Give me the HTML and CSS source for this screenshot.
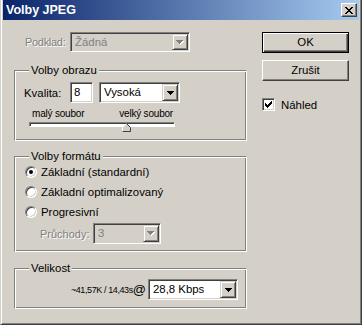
FILE: index.html
```html
<!DOCTYPE html>
<html lang="cs">

<head>
    <meta charset="UTF-8">
    <title>Volby JPEG</title>
    <link rel="stylesheet" href="styles.css">
</head>

<body>
    <div class="window">
        <div class="titlebar">
            <span class="title">Volby JPEG</span>
            <span class="close-btn">
                <svg width="8" height="7" viewBox="0 0 8 7" shape-rendering="crispEdges">
                    <path d="M0 0h2v1h-2zM6 0h2v1h-2zM1 1h2v1h-2zM5 1h2v1h-2zM2 2h4v1h-4zM3 3h2v1h-2zM2 4h4v1h-4zM1 5h2v1h-2zM5 5h2v1h-2zM0 6h2v1h-2zM6 6h2v1h-2z" fill="#000"/>
                </svg>
            </span>
        </div>

        <div class="main">
            <div class="left">
                <div class="podklad-row">
                    <span class="label disabled podklad-label">Podklad:</span>
                    <div class="combo combo-disabled podklad-combo">
                        <span class="combo-text">Žádná</span>
                        <span class="combo-btn">
                            <svg width="8" height="5" viewBox="0 0 8 5" shape-rendering="crispEdges">
                                <path d="M1 1h7v1h-1v1h-1v1h-1v1h-1v-1h-1v-1h-1v-1h-1z" fill="#fff"/>
                                <path d="M0 0h7v1h-1v1h-1v1h-1v1h-1v-1h-1v-1h-1v-1h-1z" fill="#808080"/>
                            </svg>
                        </span>
                    </div>
                </div>

                <!-- Volby obrazu -->
                <div class="group group-obraz">
                    <div class="group-title">Volby obrazu</div>
                    <div class="kvalita-row">
                        <span class="label kvalita-label">Kvalita:</span>
                        <div class="field kvalita-field">8</div>
                        <div class="combo kvalita-combo">
                            <span class="combo-text">Vysoká</span>
                            <span class="combo-btn">
                                <svg width="7" height="4" viewBox="0 0 7 4" shape-rendering="crispEdges">
                                    <path d="M0 0h7v1h-1v1h-1v1h-1v1h-1v-1h-1v-1h-1v-1h-1z" fill="#000"/>
                                </svg>
                            </span>
                        </div>
                    </div>
                    <div class="slider-labels">
                        <span>malý soubor</span>
                        <span>velký soubor</span>
                    </div>
                    <div class="slider">
                        <div class="slider-track"></div>
                        <svg class="slider-thumb" width="9" height="9" viewBox="0 0 9 9">
                            <path d="M0.5 8.5V4.5L4.5 0.5L8.5 4.5V8.5Z" fill="#d4d0c8"/>
                            <path d="M0.5 8.5V4.5L4.5 0.5" fill="none" stroke="#fff"/>
                            <path d="M4.5 0.5L8.5 4.5V8.5H0.5" fill="none" stroke="#404040"/>
                        </svg>
                    </div>
                </div>

                <!-- Volby formátu -->
                <div class="group group-format">
                    <div class="group-title">Volby formátu</div>
                    <div class="radio-row first">
                        <span class="radio checked"></span>Základní (standardní)
                    </div>
                    <div class="radio-row">
                        <span class="radio"></span>Základní optimalizovaný
                    </div>
                    <div class="radio-row">
                        <span class="radio"></span>Progresivní
                    </div>
                    <div class="pruchody-row">
                        <span class="label disabled pruchody-label">Průchody:</span>
                        <div class="combo combo-disabled pruchody-combo">
                            <span class="combo-text">3</span>
                            <span class="combo-btn">
                                <svg width="8" height="5" viewBox="0 0 8 5" shape-rendering="crispEdges">
                                    <path d="M1 1h7v1h-1v1h-1v1h-1v1h-1v-1h-1v-1h-1v-1h-1z" fill="#fff"/>
                                    <path d="M0 0h7v1h-1v1h-1v1h-1v1h-1v-1h-1v-1h-1v-1h-1z" fill="#808080"/>
                                </svg>
                            </span>
                        </div>
                    </div>
                </div>

                <!-- Velikost -->
                <div class="group group-size">
                    <div class="group-title">Velikost</div>
                    <div class="size-row">
                        <span class="size-text">~41,57K / 14,43s</span>
                        <span class="size-at">@</span>
                        <div class="combo size-combo">
                            <span class="combo-text">28,8 Kbps</span>
                            <span class="combo-btn">
                                <svg width="7" height="4" viewBox="0 0 7 4" shape-rendering="crispEdges">
                                    <path d="M0 0h7v1h-1v1h-1v1h-1v1h-1v-1h-1v-1h-1v-1h-1z" fill="#000"/>
                                </svg>
                            </span>
                        </div>
                    </div>
                </div>
            </div>

            <div class="right">
                <div class="btn btn-default">OK</div>
                <div class="btn">Zrušit</div>
                <div class="check-row">
                    <span class="checkbox">
                        <svg width="7" height="7" viewBox="0 0 7 7" shape-rendering="crispEdges">
                            <path d="M6 0h1v1h-1zM5 1h2v1h-2zM0 2h1v1h-1zM4 2h3v1h-3zM0 3h2v1h-2zM3 3h3v1h-3zM0 4h5v1h-5zM1 5h3v1h-3zM2 6h1v1h-1z" fill="#000"/>
                        </svg>
                    </span>
                    Náhled
                </div>
            </div>
        </div>
    </div>
</body>

</html>
```

FILE: styles.css
```css
body {
    margin: 0;
    font-family: 'Liberation Sans', Arial, sans-serif;
    font-size: 11.4px;
    color: #000;
    background: #d4d0c8;
}

.window {
    width: 362px;
    height: 325px;
    box-sizing: border-box;
    background: #d4d0c8;
    border-style: solid;
    border-width: 0 1px 1px 1px;
    border-color: #404040;
    border-left-color: #d4d0c8;
    box-shadow: inset 1px 0 #fff, inset -1px -1px #808080;
    padding: 0 2px 2px 2px;
}

.titlebar {
    height: 20px;
    display: flex;
    align-items: center;
    justify-content: space-between;
    padding: 0 2px 0 2px;
    background: linear-gradient(to right, #0a246a, #a6caf0);
}

.title {
    color: #fff;
    font-weight: 700;
    font-size: 12.5px;
    padding-left: 1px;
    padding-bottom: 1px;
}

.close-btn {
    width: 16px;
    height: 14px;
    box-sizing: border-box;
    display: flex;
    align-items: center;
    justify-content: center;
    background: #d4d0c8;
    border: 1px solid;
    border-color: #fff #404040 #404040 #fff;
    box-shadow: inset -1px -1px #808080;
}

.main {
    display: flex;
    align-items: flex-start;
    padding: 12px 10px 0 11px;
}

.left {
    width: 233px;
}

.right {
    width: 87px;
    margin-left: 15px;
}

.label {
    white-space: nowrap;
}

.disabled {
    color: #808080;
    text-shadow: 1px 1px #fff;
}

/* combo boxes and fields */

.combo,
.field {
    box-sizing: border-box;
    height: 21px;
    border: 1px solid;
    border-color: #808080 #fff #fff #808080;
    box-shadow: inset 1px 1px #404040, inset -1px -1px #d4d0c8;
    background: #fff;
    padding: 1px;
}

.combo {
    display: flex;
}

.combo-text {
    flex: 1;
    padding-left: 3px;
    line-height: 17px;
    white-space: nowrap;
}

.combo-btn {
    width: 16px;
    box-sizing: border-box;
    display: flex;
    align-items: center;
    justify-content: center;
    background: #d4d0c8;
    border: 1px solid;
    border-color: #d4d0c8 #404040 #404040 #d4d0c8;
    box-shadow: inset 1px 1px #fff, inset -1px -1px #808080;
}

.combo-disabled {
    background: #d4d0c8;
    color: #808080;
}

.field {
    padding: 1px 3px;
    line-height: 17px;
}

.podklad-row {
    display: flex;
    align-items: center;
    padding-left: 11px;
}

.podklad-label {
    width: 45px;
    font-size: 11px;
    letter-spacing: -0.3px;
}

.podklad-combo {
    width: 120px;
    height: 20px;
}

.podklad-combo .combo-text {
    line-height: 16px;
}

/* group boxes */

.group {
    box-sizing: border-box;
    border: 1px solid;
    border-color: #808080 #fff #fff #808080;
    box-shadow: inset 1px 1px #fff, inset -1px -1px #808080;
    padding: 0 8px 0 9px;
}

.group-title {
    width: fit-content;
    margin: -7px 0 0 5px;
    padding: 0 2px;
    line-height: 13px;
    background: #d4d0c8;
}

.group-obraz {
    margin-top: 18px;
    height: 71px;
}

.group-format {
    margin-top: 15px;
    height: 96px;
}

.group-size {
    margin-top: 16px;
    height: 41px;
}

.kvalita-row {
    display: flex;
    align-items: center;
    margin-top: 5px;
}

.kvalita-label {
    width: 46px;
}

.kvalita-field {
    width: 23px;
}

.kvalita-combo {
    width: 81px;
    margin-left: 6px;
}

.slider-labels {
    display: flex;
    justify-content: space-between;
    width: 141px;
    margin: 5px 0 0 8px;
    font-size: 10px;
    line-height: 12px;
    letter-spacing: -0.2px;
}

.slider {
    position: relative;
    width: 146px;
    height: 12px;
    margin: 1px 0 0 5px;
}

.slider-track {
    box-sizing: border-box;
    height: 5px;
    margin-top: 2px;
    border: 1px solid;
    border-color: #808080 #fff #fff #808080;
    box-shadow: inset 1px 1px #404040;
    background: #fff;
}

.slider-thumb {
    position: absolute;
    left: 93px;
    top: 1px;
}

/* radios */

.radio-row {
    display: flex;
    align-items: center;
    height: 20px;
    margin-left: 1px;
}

.radio-row.first {
    margin-top: -1px;
}

.radio {
    position: relative;
    width: 12px;
    height: 12px;
    box-sizing: border-box;
    border-radius: 50%;
    border: 1px solid;
    border-color: #808080 #fff #fff #808080;
    box-shadow: inset 1px 1px #404040, inset -1px -1px #d4d0c8;
    background: #fff;
    margin-right: 4px;
}

.radio.checked::after {
    content: "";
    position: absolute;
    left: 3px;
    top: 3px;
    width: 4px;
    height: 4px;
    border-radius: 50%;
    background: #000;
}

.pruchody-row {
    display: flex;
    align-items: center;
    margin: 1px 0 0 16px;
}

.pruchody-label {
    width: 53px;
    font-size: 11px;
}

.pruchody-combo {
    width: 68px;
}

.size-row {
    display: flex;
    align-items: center;
    justify-content: flex-end;
    margin-top: 4px;
    padding-right: 0;
}

.size-text {
    font-size: 9px;
    letter-spacing: -0.4px;
}

.size-at {
    font-size: 13px;
    margin-right: 2px;
}

.size-combo {
    width: 90px;
}

/* buttons */

.btn {
    box-sizing: border-box;
    height: 21px;
    display: flex;
    align-items: center;
    justify-content: center;
    border: 1px solid;
    border-color: #fff #404040 #404040 #fff;
    box-shadow: inset -1px -1px #808080;
    background: #d4d0c8;
    padding-bottom: 1px;
}

.btn-default {
    border-color: #000;
    box-shadow: inset 1px 1px #fff, inset -1px -1px #404040, inset -2px -2px #808080;
}

.btn+.btn {
    margin-top: 7px;
}

.check-row {
    display: flex;
    align-items: center;
    margin-top: 17px;
}

.checkbox {
    width: 13px;
    height: 13px;
    box-sizing: border-box;
    display: flex;
    align-items: center;
    justify-content: center;
    border: 1px solid;
    border-color: #808080 #fff #fff #808080;
    box-shadow: inset 1px 1px #404040, inset -1px -1px #d4d0c8;
    background: #fff;
    margin-right: 6px;
}
```
